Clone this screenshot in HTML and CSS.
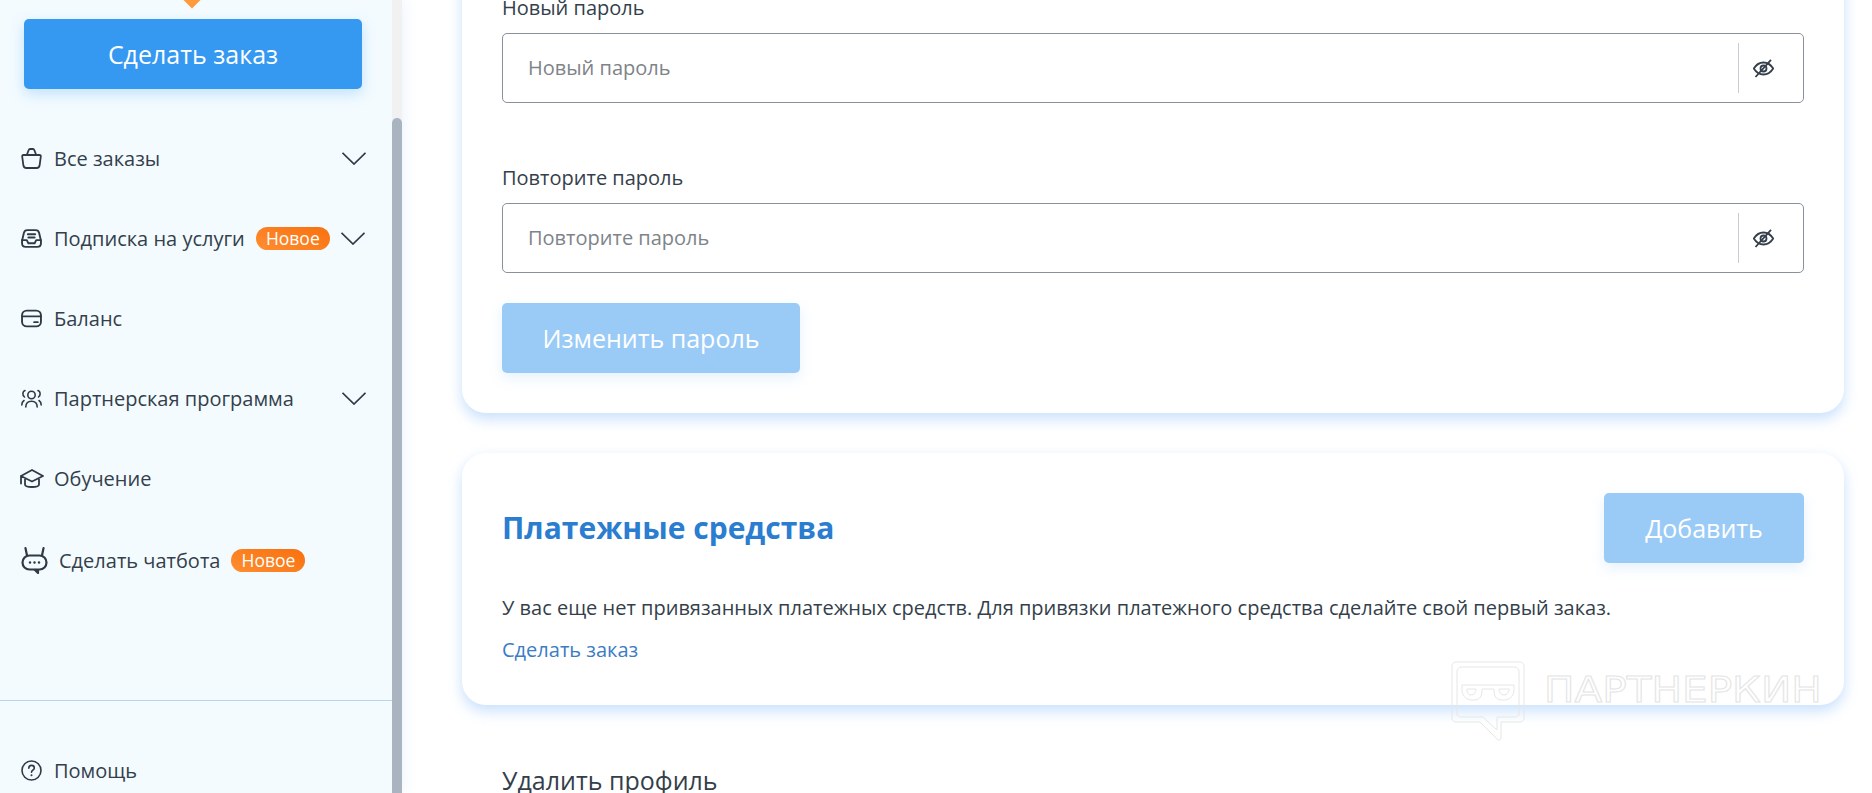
FILE: index.html
```html
<!DOCTYPE html>
<html lang="ru">
<head>
<meta charset="utf-8">
<title>Профиль</title>
<link rel="stylesheet" href="styles.css">
</head>
<body>
<div class="app">
  <aside class="sidebar">
    <div class="side-inner">
      <div class="diamond"></div>
      <a class="btn btn-order">Сделать заказ</a>
      <nav class="menu">
        <a class="item">
          <svg class="ico" viewBox="0 0 21 21"><path d="M2.500 7h16c.9 0 1.400.6 1.300 1.500l-1.100 8.300c-.2 1.900-1.500 3.200-3.100 3.200H5.400c-1.600 0-2.900-1.300-3.100-3.200L1.200 8.500C1.100 7.600 1.600 7 2.500 7zM5.800 7l1.800-4.800C7.900 1.400 8.400 1 9.100 1h2.800c.7 0 1.200.4 1.500 1.200L15.200 7"/></svg>
          <span class="label">Все заказы</span>
          <svg class="chev" viewBox="0 0 24 13"><path d="M.5.8 12 12 23.500.8"/></svg>
        </a>
        <a class="item">
          <svg class="ico" viewBox="0 0 20 18"><path d="M1 11 2.800 3.500C3.200 1.800 4.300 1 6 1h8c1.700 0 2.800.8 3.200 2.500L19 11v2.500c0 2.200-1.300 3.500-3.500 3.500h-11C2.300 17 1 15.700 1 13.500z"/><path d="M1 10.500h4.500l1.500 3h6l1.500-3H19M6.500 5h7M7 8h6"/></svg>
          <span class="label">Подписка на услуги</span>
          <span class="badge">Новое</span>
          <svg class="chev" viewBox="0 0 24 13"><path d="M.5.8 12 12 23.500.8"/></svg>
        </a>
        <a class="item">
          <svg class="ico" viewBox="0 0 20 17"><rect x="1" y="1" width="18" height="15" rx="4.500"/><path d="M1 6.500h18M12.500 12h3.500"/></svg>
          <span class="label">Баланс</span>
        </a>
        <a class="item">
          <svg class="ico thin" viewBox="0 0 21 19"><circle cx="10.500" cy="6" r="3.700"/><path d="M4.800 18c0-3.800 2-5.800 5.700-5.800s5.700 2 5.700 5.800M4 1.500C1.500 2.500 1 6 3.500 8M17 1.500c2.500 1 3 4.500.5 6.500M.8 16c0-2 .7-3.500 2.200-4.500M20.200 16c0-2-.7-3.500-2.200-4.500"/></svg>
          <span class="label">Партнерская программа</span>
          <svg class="chev" viewBox="0 0 24 13"><path d="M.5.8 12 12 23.500.8"/></svg>
        </a>
        <a class="item">
          <svg class="ico wide" viewBox="0 0 24 19"><path d="M12 1 23 7l-11 5.500L1 7zM5 10v5.500c0 1.500 3 2.500 7 2.500s7-1 7-2.500V10M1 7v7.500"/></svg>
          <span class="label">Обучение</span>
        </a>
        <a class="item item-bot">
          <svg class="ico bot" viewBox="0 0 27 27"><path d="M4.500 1.200 6 8.500M22.500 1.200 21 8.500"/><rect x="1.500" y="8.500" width="24" height="14" rx="7"/><path d="m14 23 3 3v-3"/><circle class="dot" cx="9" cy="15.500" r="1.200"/><circle class="dot" cx="13.500" cy="15.500" r="1.200"/><circle class="dot" cx="18" cy="15.500" r="1.200"/></svg>
          <span class="label">Сделать чатбота</span>
          <span class="badge">Новое</span>
        </a>
      </nav>
      <div class="divider"></div>
      <a class="item item-help">
        <svg class="ico thin" viewBox="0 0 21 21"><circle cx="10.500" cy="10.500" r="9.500"/><path d="M7.800 8.200c0-1.800 1.100-2.800 2.700-2.800s2.800 1 2.800 2.500c0 2.200-2.800 2.300-2.800 4.400"/><circle class="dot" cx="10.500" cy="15.300" r="1"/></svg>
        <span class="label">Помощь</span>
      </a>
    </div>
    <div class="scrollbar"><div class="thumb"></div></div>
  </aside>
  <main class="main">
    <section class="card card-pass">
      <label class="field-label">Новый пароль</label>
      <div class="input">
        <span class="placeholder">Новый пароль</span>
        <span class="eye"><svg viewBox="0 0 21 19"><path d="M.8 9.500c2.500-4 5.500-6 9.700-6s7.200 2 9.700 6c-2.500 4-5.500 6-9.700 6s-7.200-2-9.700-6z"/><circle cx="10.500" cy="9.500" r="3"/><path d="M18 .8 2.500 18"/></svg></span>
      </div>
      <label class="field-label second">Повторите пароль</label>
      <div class="input">
        <span class="placeholder">Повторите пароль</span>
        <span class="eye"><svg viewBox="0 0 21 19"><path d="M.8 9.500c2.500-4 5.500-6 9.700-6s7.200 2 9.700 6c-2.500 4-5.500 6-9.700 6s-7.200-2-9.700-6z"/><circle cx="10.500" cy="9.500" r="3"/><path d="M18 .8 2.500 18"/></svg></span>
      </div>
      <a class="btn btn-off btn-change">Изменить пароль</a>
    </section>
    <section class="card card-pay">
      <div class="pay-head">
        <h2 class="pay-title">Платежные средства</h2>
        <a class="btn btn-off btn-add">Добавить</a>
      </div>
      <p class="pay-text">У вас еще нет привязанных платежных средств. Для привязки платежного средства сделайте свой первый заказ.</p>
      <a class="pay-link">Сделать заказ</a>
    </section>
    <h2 class="delete-title">Удалить профиль</h2>
  </main>
</div>
<div class="watermark">
  <svg class="wm-logo" viewBox="0 0 74 80"><path d="M5 1h64c2 0 4 2 4 4v52c0 2-2 4-4 4H50v16c0 2-3 3-4 1L29 61H5c-2 0-4-2-4-4V5c0-2 2-4 4-4z"/><path d="M10 6h54c2 0 4 2 4 4v43c0 2-2 3-4 3H46v13L32 56H10c-2 0-4-1-4-3V10c0-2 2-4 4-4z"/><path d="M11 24h52v5c0 4-3 10-10 10h-2c-6 0-8-4-8-10v-1H31v1c0 6-2 10-8 10h-2c-7 0-10-6-10-10z"/><path d="M16 28h9c0 3-2 6-5 6s-4-3-4-6zM48 28h10c0 3-2 6-5 6s-5-3-5-6z"/></svg>
  <span class="wm-text">ПАРТНЕРКИН</span>
</div>
</body>
</html>
```
FILE: styles.css
```css
* { box-sizing: border-box; }
html, body { margin: 0; height: 100%; overflow: hidden; }
body { font-family: "Open Sans", "Noto Sans", sans-serif; color: #343f4b; background: #fff; }
.app { display: flex; height: 793px; overflow: hidden; }

.sidebar { width: 402px; flex: none; display: flex; background: #f3fbff; box-shadow: 4px 0 12px rgba(60,130,240,.08); position: relative; z-index: 1; }
.side-inner { width: 392px; flex: none; padding: 19px 0 0; position: relative; }
.diamond { position: absolute; left: 186px; top: -6px; width: 12px; height: 12px; background: #ff9a3c; transform: rotate(45deg); }
.scrollbar { width: 10px; background: #f1f1f1; padding-top: 118px; }
.thumb { height: 100%; background: #a9b4c0; border-radius: 5px 5px 0 0; }

.btn { display: flex; align-items: center; justify-content: center; height: 70px; border-radius: 5px; color: #fff; font-size: 25px; }
.btn-order { width: 338px; margin-left: 24px; background: #3598f1; box-shadow: 0 5px 14px rgba(53,152,241,.25); }
.btn-off { background: #9acbf7; box-shadow: 0 5px 14px rgba(53,152,241,.13); }

.menu { display: flex; flex-direction: column; padding-top: 29px; }
.item { display: flex; align-items: center; height: 80px; padding-left: 21px; font-size: 20px; color: #343f4b; }
.ico { width: 21px; height: 21px; flex: none; fill: none; stroke: #2f3a45; stroke-width: 1.800; stroke-linecap: round; stroke-linejoin: round; margin-right: 12px; }
.ico.thin { stroke-width: 1.600; }
.ico.wide { width: 24px; margin-left: -1px; margin-right: 10px; }
.ico.bot { width: 27px; height: 27px; margin-right: 11px; stroke-width: 2.200; }
.dot { fill: #2f3a45; stroke: none; }
.chev { width: 24px; height: 13px; margin-left: auto; margin-right: 26px; fill: none; stroke: #2f3a45; stroke-width: 1.700; }
.badge { display: inline-flex; align-items: center; justify-content: center; width: 74px; height: 23px; margin-left: 11px; border-radius: 12px; background: linear-gradient(200deg, #f8700f, #ff8e30); color: #fff; font-size: 17.500px; }
.badge + .chev { margin-left: 11px; margin-right: 0; }
.item-bot { height: 84px; }
.item-bot .badge { margin-left: 11px; }
.divider { height: 1px; background: #b4d6ec; margin-top: 98px; }
.item-help { margin-top: 29px; }

.main { flex: 1; padding: 0 28px 0 60px; background: #fff; min-width: 0; }
.card { background: #fff; border-radius: 24px; padding: 0 40px; box-shadow: 0 6px 14px rgba(50,140,245,.27); }
.card-pass { height: 453px; margin-top: -40px; padding-top: 36px; }
.field-label { display: block; font-size: 20px; line-height: 24px; color: #343f4b; }
.field-label.second { margin-top: 63px; }
.input { display: flex; align-items: center; justify-content: space-between; height: 70px; margin-top: 13px; border: 1px solid #87929d; border-radius: 5px; padding-left: 25px; background: #fff; }
.second + .input { margin-top: 13px; }
.placeholder { font-size: 20px; color: #7e8488; padding-bottom: 2px; }
.eye { width: 65px; height: 50px; display: flex; align-items: center; padding-left: 14px; border-left: 1px solid #c8cdd1; }
.eye svg { width: 21px; height: 19px; fill: none; stroke: #343f4b; stroke-width: 1.800; }
.btn-change { width: 298px; margin-top: 30px; }

.card-pay { height: 252px; margin-top: 40px; padding-top: 40px; }
.pay-head { display: flex; justify-content: space-between; align-items: center; }
.pay-title { margin: -2px 0 0; font-size: 30px; font-weight: 700; color: #2a7dcf; }
.btn-add { width: 200px; }
.pay-text { margin: 31px 0 0; font-size: 20px; line-height: 28px; color: #343f4b; }
.pay-link { display: block; margin-top: 14px; font-size: 20px; line-height: 28px; color: #3b7cc4; }
.delete-title { margin: 59px 0 0; padding-left: 40px; font-size: 25px; line-height: 32px; font-weight: 400; color: #343f4b; }

.watermark { position: absolute; left: 1451px; top: 661px; display: flex; align-items: center; gap: 19px; z-index: 2; pointer-events: none; }
.wm-logo { width: 74px; height: 80px; fill: none; stroke: #e6e6e6; stroke-width: 1; }
.wm-text { margin-top: -22px; font-family: "DejaVu Sans", sans-serif; font-size: 36px; line-height: 40px; color: transparent; -webkit-text-stroke: 1px #e4e4e4; white-space: nowrap; transform: scaleX(1.127); transform-origin: left center; }
```
